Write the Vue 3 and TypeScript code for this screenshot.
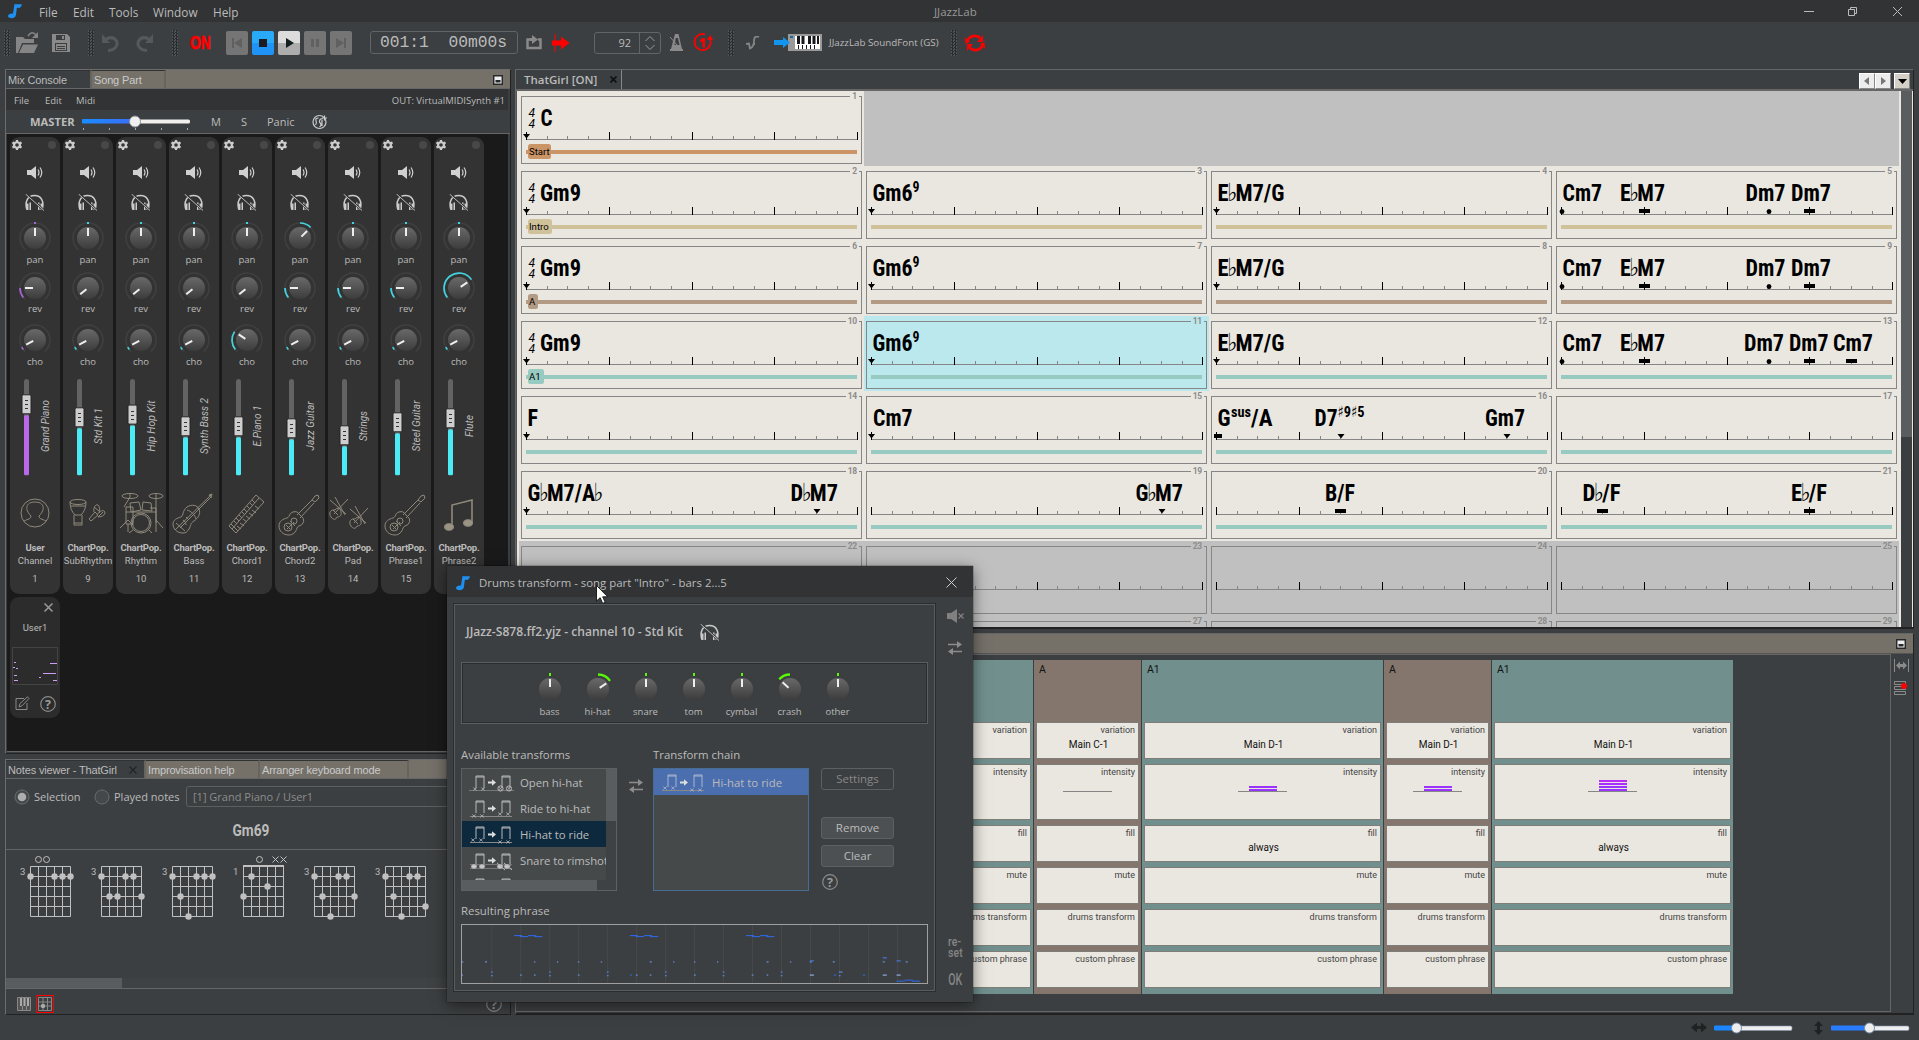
<script setup lang="ts">
interface Chord { t: string; x: number; w: number; sup?: string; sx?: number; sw?: number; tail?: string; tx?: number; tw?: number }
interface Mark { k: 'tri' | 'dot' | 'box' | 'half'; x: number }
interface Bar { n: number; sig?: boolean; label?: string; lw?: number; color?: string; sel?: boolean; off?: boolean; chords: Chord[]; marks: Mark[] }

const ORANGE = '#cb9467', SAND = '#cfc19a', BROWN = '#b29a85', TEAL = '#97cac1'
const gm9: Chord = { t: 'Gm9', x: 21, w: 41 }
const gm69: Chord = { t: 'Gm6', x: 8.5, w: 40, sup: '9', sx: 48.5, sw: 7 }
const ebg: Chord = { t: 'E♭M7/G', x: 8.5, w: 67 }
const tri0: Mark[] = [{ k: 'tri', x: 7.5 }]
const turn: Chord[] = [
  { t: 'Cm7', x: 8.5, w: 39.5 }, { t: 'E♭M7', x: 66, w: 45 },
  { t: 'Dm7', x: 191.5, w: 40 }, { t: 'Dm7', x: 237, w: 40 },
]
const turnMarks: Mark[] = [{ k: 'dot', x: 8 }, { k: 'box', x: 90.5 }, { k: 'dot', x: 215 }, { k: 'box', x: 255.5 }]

const section = (start: number, label: string, lw: number, color: string): Bar[] => [
  { n: start, sig: true, label, lw, color, chords: [gm9], marks: tri0 },
  { n: start + 1, color, chords: [gm69], marks: tri0 },
  { n: start + 2, color, chords: [ebg], marks: tri0 },
  { n: start + 3, color, chords: turn, marks: turnMarks },
]
const a1 = section(10, 'A1', 16, TEAL)
a1[1].sel = true
a1[3].chords = [turn[0], turn[1], { t: 'Dm7', x: 190, w: 40 }, { t: 'Dm7', x: 235, w: 39.5 }, { t: 'Cm7', x: 279, w: 40 }]
a1[3].marks = [...turnMarks, { k: 'box', x: 297.5 }]

const firstBar: Bar = { n: 1, sig: true, label: 'Start', lw: 23, color: ORANGE, chords: [{ t: 'C', x: 21.5, w: 12 }], marks: tri0 }
const bars: Bar[] = [
  ...section(2, 'Intro', 24, SAND),
  ...section(6, 'A', 10, BROWN),
  ...a1,
  { n: 14, color: TEAL, chords: [{ t: 'F', x: 8.5, w: 10.5 }], marks: tri0 },
  { n: 15, color: TEAL, chords: [{ t: 'Cm7', x: 9, w: 39.5 }], marks: tri0 },
  { n: 16, color: TEAL, chords: [
    { t: 'G', x: 8.5, w: 13, sup: 'sus', sx: 22, sw: 20, tail: '/A', tx: 42, tw: 21.5 },
    { t: 'D7', x: 105.5, w: 23, sup: '♯9♯5', sx: 128.5, sw: 27 },
    { t: 'Gm7', x: 276, w: 40 }], marks: [{ k: 'half', x: 5 }, { k: 'tri', x: 132 }, { k: 'tri', x: 298 }] },
  { n: 17, color: TEAL, chords: [], marks: [] },
  { n: 18, color: TEAL, chords: [{ t: 'G♭M7/A♭', x: 8.5, w: 76 }, { t: 'D♭M7', x: 271.5, w: 47.5 }], marks: [tri0[0], { k: 'tri', x: 298 }] },
  { n: 19, color: TEAL, chords: [{ t: 'G♭M7', x: 271.5, w: 47.5 }], marks: [{ k: 'tri', x: 298 }] },
  { n: 20, color: TEAL, chords: [{ t: 'B/F', x: 116, w: 30 }], marks: [{ k: 'box', x: 131.5 }] },
  { n: 21, color: TEAL, chords: [{ t: 'D♭/F', x: 28.5, w: 38 }, { t: 'E♭/F', x: 237, w: 36 }], marks: [{ k: 'box', x: 48.5 }, { k: 'box', x: 255.5 }] },
  ...[22, 23, 24, 25, 26, 27, 28, 29].map((n): Bar => ({ n, off: true, chords: [], marks: [] })),
]
const ticks = Array.from({ length: 17 }, (_, i) => ({ x: Math.round(7 + i * 20.7), big: i % 4 === 0 }))
// Splits a chord symbol so that flats can be kerned against the root letter.
const pieces = (t: string): string[] => t.split(/(♭)/).filter(s => s.length > 0)

const polar = (a: number, r: number): string => {
  const t = (a - 90) * Math.PI / 180
  return `${(18 + r * Math.cos(t)).toFixed(2)} ${(16 + r * Math.sin(t)).toFixed(2)}`
}
const arc = (from: number, to: number, r = 15): string => {
  const a = Math.min(from, to), b = Math.max(from, to)
  return `M${polar(a, r)}A${r} ${r} 0 ${b - a > 180 ? 1 : 0} 1 ${polar(b, r)}`
}
interface Knob { name: string; angle: number; from: number }
interface Strip { name: string; part: string; ch: string; inst: string; vol: number; icon: string; len: number; knobs: Knob[]; color: string; fill: string }
const strip = (name: string, part: string, ch: string, inst: string, len: number, vol: number, icon: string, pan: number, rev: number, cho: number): Strip => ({
  name, part, ch, inst, len, vol, icon,
  color: ch === '1' ? '#a963d8' : '#43d3df', fill: ch === '1' ? '#b968ee' : '#4ceaf5',
  knobs: [{ name: 'pan', angle: pan, from: 0 }, { name: 'rev', angle: rev, from: -129 }, { name: 'cho', angle: cho, from: -129 }],
})
const strips: Strip[] = [
  strip('User', 'Channel', '1', 'Grand Piano', 52, 405.3, 'user', 0, -90, -118),
  strip('ChartPop.', 'SubRhythm', '9', 'Std Kit 1', 36, 418.3, 'perc', 0, -129, -118),
  strip('ChartPop.', 'Rhythm', '10', 'Hip Hop Kit', 51, 415.6, 'drums', 0, -129, -118),
  strip('ChartPop.', 'Bass', '11', 'Synth Bass 2', 56, 427.3, 'bass', 0, -129, -118),
  strip('ChartPop.', 'Chord1', '12', 'E.Piano 1', 41, 427.3, 'keys', 0, -129, -56),
  strip('ChartPop.', 'Chord2', '13', 'Jazz Guitar', 49, 429.3, 'guitar', 45, -90, -118),
  strip('ChartPop.', 'Pad', '14', 'Strings', 30, 436.3, 'violins', 0, -90, -118),
  strip('ChartPop.', 'Phrase1', '15', 'Steel Guitar', 51, 423.3, 'guitar', 0, -90, -118),
  strip('ChartPop.', 'Phrase2', '16', 'Flute', 22, 419.3, 'notes', 0, 56, -118),
]
const drumKnobs: Knob[] = [
  { name: 'bass', angle: 0, from: 0 }, { name: 'hi-hat', angle: 56, from: 0 }, { name: 'snare', angle: 0, from: 0 },
  { name: 'tom', angle: 0, from: 0 }, { name: 'cymbal', angle: 0, from: 0 }, { name: 'crash', angle: -48, from: 0 }, { name: 'other', angle: 0, from: 0 },
]

const guitarArt = '<path d="M14 45c-6 0-10-4-10-9s4-7 8-8c3-1 2-5 6-6 3-1 5 0 6 2l3 3c2 2 2 4 1 6-1 3-5 2-6 5-1 4-4 7-8 7z"/><path d="M11 35l4 4M15 31l5 5M12 39l7-7M22 25L37 10M25 28L39 13M37 10l3-4 3-1 1 3-4 4z"/><circle cx="13" cy="37" r="4"/><circle cx="19" cy="31" r="3"/>'
const violin = '<path d="M3 27c-3-4 0-8 4-7 2-3 6-2 6 2 1 4-2 5-4 5-1 3-4 3-6 0zM6 24L20 9M2 10l16 14M7 7l10 18M5 20l5 5"/>'
const art: Record<string, string> = {
  user: '<circle cx="25" cy="23" r="14"/><path d="M14 31c4-2 7-2 7-5-7-7-5-14 4-14s11 7 4 14c0 3 3 3 7 5"/>',
  perc: '<ellipse cx="15" cy="12" rx="8" ry="2.5"/><path d="M7 12c0 6 2 10 5 13h6c3-3 5-7 5-13M8 16h14M11 25v10h8V25M11 33h8"/><path d="M26 29l6-7 3 3-7 6zM31 22c-1-5 2-8 4-7 2 2 2 5 1 8M34 25c4-6 8-5 8-2-1 3-4 4-7 4M31 17l5 4M35 27l5-5"/>',
  drums: '<ellipse cx="14" cy="6" rx="8" ry="2.5"/><ellipse cx="40" cy="6" rx="7" ry="2.5"/><circle cx="25" cy="33" r="10"/><circle cx="25" cy="33" r="8.5"/><path d="M14 3v4l-6 10M40 3v30M14 13l9-1 2 8-10 2zM27 12l8 1 1 8-10-1zM10 17h7v17h-7zM34 18h6v16M10 22h30M12 30l-8 8M12 34v8M12 30l5 5M40 30l7 8M40 34v8M17 40l-4 3M33 40l3 3"/>',
  bass: '<path d="M14 43c-6 0-10-4-10-9 0-4 4-6 8-7 3-2 1-6 6-10 5-3 10-2 12 2 2 5-1 9-5 12-4 2-3 5-5 8-2 3-3 4-6 4zM6 40L42 5M11 38L41 8M7 33l9 8M17 27l3 3M14 30c2 1 3 3 3 5M18 20c4 1 8 5 9 9M40 5l3-1-1 4z"/>',
  keys: '<path d="M7 36L34 5l8 7-28 31zM10 39L37 8M9 34l7 7M12 31l3 3M14 28l3 3M17 25l3 3M20 22l3 3M22 19l3 3M25 16l3 3M28 13l3 3M30 10l3 3M15 36l4 3M18 33l4 3M21 29l4 3M24 26l4 3M27 23l4 3M30 20l4 3M33 16l4 3"/>',
  guitar: guitarArt,
  violins: violin + '<g transform="translate(20 9)">' + violin + '</g>',
  notes: '<path d="M18 36V15l20-5v23" stroke-width="1.6"/><ellipse cx="15" cy="37" rx="4.5" ry="3.3" fill="#9a9484"/><ellipse cx="34" cy="33" rx="4.5" ry="3.3" fill="#9a9484"/>',
}

interface Fret { base: string; open: number[]; mute: number[]; dots: [number, number][]; nut?: boolean }
const frets: Fret[] = [
  { base: '3', open: [1, 2], mute: [], dots: [[0, 1], [3, 1], [4, 1], [5, 1]] },
  { base: '3', open: [], mute: [], dots: [[0, 1], [3, 1], [4, 1], [1, 3], [2, 3], [5, 3]] },
  { base: '3', open: [], mute: [], dots: [[0, 1], [3, 1], [4, 1], [5, 1], [1, 3], [2, 5]] },
  { base: '1', open: [2], mute: [4, 5], dots: [[1, 1], [3, 2], [0, 3]], nut: true },
  { base: '3', open: [], mute: [], dots: [[0, 1], [3, 1], [4, 1], [1, 3], [5, 3], [2, 5]] },
  { base: '3', open: [], mute: [], dots: [[0, 1], [3, 1], [4, 1], [1, 3], [5, 4], [2, 5]] },
]

interface Part { name: string; w: number; brown: boolean; variation: string; level: number; fill: string }
const parts: Part[] = [
  { name: 'A1', w: 241, brown: false, variation: '', level: 0, fill: '' },
  { name: 'A', w: 107, brown: true, variation: 'Main C-1', level: 0, fill: '' },
  { name: 'A1', w: 241, brown: false, variation: 'Main D-1', level: 2, fill: 'always' },
  { name: 'A', w: 107, brown: true, variation: 'Main D-1', level: 2, fill: '' },
  { name: 'A1', w: 241, brown: false, variation: 'Main D-1', level: 4, fill: 'always' },
]
const rows = ['variation', 'intensity', 'fill', 'mute', 'drums transform', 'custom phrase']
const levelColors = ['#9933ff', '#9b33ff', '#a62fff', '#b82df8']

const transforms = [
  { name: 'Open hi-hat', kind: 'open' }, { name: 'Ride to hi-hat', kind: 'ride' },
  { name: 'Hi-hat to ride', kind: 'hat' }, { name: 'Snare to rimshot', kind: 'snare' }, { name: '', kind: 'hat' },
]
const pair = (x: number, y: number): string => `<path d="M${x} ${y + 12}V${y}h8v12M${x} ${y + 1}h8"/>`
const cross = (x: number, y: number): string => `<path stroke-width=".8" d="M${x - 1.7} ${y - 1.5}l3.4 3M${x + 1.7} ${y - 1.5}l-3.4 3"/>`
const head = (x: number, y: number): string => `<ellipse cx="${x}" cy="${y}" rx="2.6" ry="1.8" fill="#ccc"/>`
const arrowArt = '<path fill="#ddd" stroke="none" d="M19 9.500h4v-2.200l4 3.200-4 3.200v-2.200h-4z"/>'
const tfArt: Record<string, string> = {
  open: pair(7, 4) + pair(33, 4) + arrowArt + '<path stroke="#777" d="M0 18.500h45"/>' + cross(6, 17) + cross(14, 17) + '<circle cx="31.500" cy="16.500" r="2.600"/><circle cx="40" cy="16.500" r="2.600"/>' + cross(31.5, 16.5) + cross(40, 16.5),
  ride: pair(7, 3) + pair(33, 3) + arrowArt + '<path stroke="#888" d="M1 18.500h42"/>' + cross(5, 18) + cross(13, 18) + cross(31, 16) + cross(39, 16),
  hat: pair(7, 3) + pair(33, 3) + arrowArt + '<path stroke="#888" d="M1 18.500h42"/>' + cross(4, 16) + cross(12, 16) + cross(31, 18) + cross(39, 18),
  snare: pair(7, 4) + pair(33, 4) + arrowArt + '<path stroke="#777" d="M1 14.500h42M1 18.500h42"/>' + head(5, 16.5) + head(13, 16.5) + head(31, 16.5) + head(38, 16.500) + '<path d="M28 13l8 7M35 13l8 7"/>',
}

const gridLines = Array.from({ length: 15 }, (_, i) => 137 + i * 85.8)
const phrase: [number, number, number, string][] = [
  ...[204, 547, 891].flatMap((x): [number, number, number, string][] => [
    [x, 1129, 24, '#2f6bf0'], [x + 18, 1132, 24, '#2f6bf0'], [x + 42, 1129, 24, '#2f6bf0'], [x + 60, 1132, 24, '#2f6bf0']]),
  ...[48, 118, 263, 331, 393, 461, 606, 675, 737, 805, 952, 1021, 1080, 1148, 1296, 1364].map((x): [number, number, number, string] => [x, 1207, x % 2 ? 4 : 6, '#6fa0ff']),
  ...[136, 308, 479, 651, 822, 994, 1166].flatMap((x): [number, number, number, string][] => [[x, 1237, x > 1100 ? 11 : 5, '#5c8eff'], [x, 1248, 5, '#5c8eff']]),
  ...[48, 222, 263, 393, 565, 606, 737, 908, 952].map((x): [number, number, number, string] => [x, 1246, 5, '#6fa0ff']),
  [547, 1246, 6, '#2f6bf0'], [1080, 1246, 12, '#9cc0ff'], [1151, 1246, 7, '#2f6bf0'], [1237, 1246, 7, '#2f6bf0'],
  [1296, 1246, 12, '#9cc0ff'], [1337, 1246, 12, '#9cc0ff'], [1080, 1204, 12, '#4a80f5'], [1296, 1195, 12, '#4a80f5'], [1337, 1204, 12, '#4a80f5'],
  [1337, 1264, 24, '#2f6bf0'], [1361, 1261, 24, '#2f6bf0'], [1382, 1264, 24, '#2f6bf0'],
]

const note = '<path fill="#1e90f0" d="M6.500 0c2 .8 4.500 0 7.500.3-.5 1.500-.8 2.700-2.200 3.500-1.300.4-2-.2-3 .2L8 10.500c-.2 2.500-2 3.700-4.500 3.700-2 0-3.500-.8-3.500-2.200C0 10 2.500 9.200 5 9.500z"/>'
const phonesArt = (bg: string): string => `<path fill="none" stroke="#ccc" stroke-width="1.500" d="M1.800 15.500C-.5 7 3 1.500 9.500 1.500S19.500 7 17.200 15.500"/><path fill="#ccc" d="M1 9.500h2.500v6.500H1.500zM15.500 9.500H18l-.5 6.500h-2zM4.500 8.500H6V16H4.500zM13 8.500h1.500V16H13z"/><path stroke="${bg}" stroke-width="2.200" d="M1.500 0L19 16.500"/><path stroke="#bbb" d="M.5 0L19 16.500"/>`
const phones = phonesArt('#333')
const phonesDialog = phonesArt('#3c3f41')
const speaker = '<path fill="#d0d0d0" d="M0 4h4l5-4v13L4 9H0z"/><path fill="none" stroke="#d0d0d0" stroke-width="1.200" d="M11 3.500q2 3 0 6M13 1.500q3.500 5 0 10"/>'
const gear = '<path fill="#ccc" fill-rule="evenodd" d="M4 0h2l.4 1.500 1.200.6L9 1.500l1 1.800-1.100 1.100v1.200L10 6.700 9 8.500l-1.400-.6-1.200.6L6 10H4l-.4-1.500-1.200-.6L1 8.500 0 6.700l1.100-1.100V4.400L0 3.300l1-1.800 1.400.6 1.200-.6zM5 3.200a1.800 1.800 0 100 3.600 1.800 1.800 0 000-3.600z"/>'
const swap = '<path fill="none" stroke="#8c8c8c" stroke-width="1.300" d="M0 3.500h11M2 10.500h12"/><path fill="#8c8c8c" d="M9 0l5 3.500L9 7zM5 7v7L0 10.500z"/>'
</script>

<template>
  <div class="app">
    <header class="titlebar">
      <svg class="logo" width="15" height="15" v-html="note" />
      <nav class="menu"><span class="m1">File</span><span class="m2">Edit</span><span class="m3">Tools</span><span class="m4">Window</span><span>Help</span></nav>
      <div class="apptitle">JJazzLab</div>
      <svg class="winbtns" width="110" height="22" fill="none" stroke="#bbb"><path d="M9 11.500h10M53.500 9.500h6v6h-6zM55.500 9.500v-2h6v6h-2M98 7l9 9M107 7l-9 9" /></svg>
    </header>

    <div class="toolbar">
      <i class="grip" />
      <svg class="t-open" width="23" height="24"><path fill="#858585" d="M0 22V6h7l2 2h9v4H6L2 22zM7 13.500h15l-4 8.500H3z" /><path fill="none" stroke="#858585" stroke-width="1.500" d="M12 5q4-6 8-1" /><path fill="#858585" d="M22 1v6h-6z" /></svg>
      <svg class="t-save" width="19" height="19"><path fill="#8a8a8a" d="M0 1h15l3 3v15H0z" /><path fill="#3c3f41" d="M4 2h9v5H4zM3 10h12v8H3z" /><path fill="#8a8a8a" d="M10 3h2v3h-2zM4 11h10v6H4z" /><path stroke="#3c3f41" d="M5 13.500h8M5 15.500h8" /></svg>
      <i class="grip g2" />
      <svg class="t-undo" width="19" height="18" fill="none" stroke="#56585a" stroke-width="3"><path d="M4 5.500Q12 1 15.500 7c2 5-2 9.500-8.500 9.500" /><path fill="#56585a" stroke="none" d="M1 0v9h8z" /></svg>
      <svg class="t-redo" width="19" height="18" fill="none" stroke="#56585a" stroke-width="3"><path d="M15 5.500Q7 1 3.500 7c-2 5 2 9.500 8.500 9.500" /><path fill="#56585a" stroke="none" d="M18 0v9h-8z" /></svg>
      <i class="grip g3" />
      <b class="on"><span>ON</span></b>
      <div class="transport">
        <button><svg width="22" height="24" fill="#606060"><path d="M6 7h2v10H6zM16 7v10l-8-5z" /></svg></button>
        <button class="stop"><svg width="22" height="24"><path fill="#1b1b20" d="M7 8h8v8H7z" /></svg></button>
        <button class="play"><svg width="22" height="24"><path fill="#142020" d="M8 7l8 5-8 5z" /></svg></button>
        <button><svg width="22" height="24" fill="#606060"><path d="M7 8h3v8H7zM12 8h3v8h-3z" /></svg></button>
        <button><svg width="22" height="24" fill="#606060"><path d="M6 7v10l8-5zM14 7h2v10h-2z" /></svg></button>
      </div>
      <div class="time">001:1&nbsp; 00m00s</div>
      <svg class="t-loop" width="17" height="16" fill="none" stroke="#8a8a8a" stroke-width="2.500"><path d="M5 4.500H1.500V13h13V4.500H12" /><path fill="#8a8a8a" stroke="none" d="M6 0l6 4.500L6 9V6H4V3h2z" /></svg>
      <svg class="t-follow" width="18" height="18" fill="#f00"><path d="M0 6.500h9V2.500l8.500 6.500L9 15.500v-4H0z" /><path d="M2.500 0h1v18h-1z" /></svg>
      <div class="tempo"><span>92</span><svg width="20" height="22" fill="none" stroke="#999"><path d="M5.500 9l4.500-4.500L14.500 9M5.500 13l4.500 4.500 4.500-4.500" /></svg></div>
      <svg class="t-metro" width="13" height="17"><path fill="#8a8a8a" fill-rule="evenodd" d="M5 0h3.500l3.500 15h1v2H0v-2h1zM5.700 4L4.500 11h5L8 4z" /><path stroke="#8a8a8a" d="M0 3l8 9" /></svg>
      <svg class="t-one" width="20" height="19" fill="none" stroke="#f00" stroke-width="1.800"><path d="M12 1.400A8 8 0 1015.800 4" /><path fill="#f00" stroke="none" d="M14 7l3.500-5L20 7zM9.500 5H12v9.500H9.500V8.500L7 9V7z" /></svg>
      <i class="grip g4" />
      <svg class="t-curve" width="14" height="14" fill="none" stroke="#858585" stroke-width="1.800"><path d="M0 8l3-.5 1 5Q8 11 8 5t5-4M7 8h2" /></svg>
      <svg class="t-piano" width="49" height="19"><path fill="#999" d="M14 1h34v17H14z" /><path fill="#1295ee" d="M0 7h9V4l7 5.500L9 15v-3H0z" /><path fill="#fff" d="M21 3h25v13H21z" /><path fill="#16181c" d="M23 3h3v8h-3zM27.500 3h3v8h-3zM34 3h3v8h-3zM38.500 3h3v8h-3zM43 3h2v8h-2zM24 12h1v4h-1zM28 12h1v4h-1zM32 12h1v4h-1zM36 12h1v4h-1zM40 12h1v4h-1z" /><path fill="#176aa0" d="M16 3h3v2h-3z" /></svg>
      <span class="font">JJazzLab SoundFont (GS)</span>
      <i class="grip g5" />
      <svg class="t-sync" width="20" height="18" fill="none" stroke="#f00" stroke-width="2.600"><path d="M2.300 8A7.500 7 0 0115 4M17.700 10A7.500 7 0 015 14" /><path fill="#f00" stroke="none" d="M0 3l5 5-4.500 2zM20 15l-5-5 4.500-2z" /><path fill="#f00" stroke="none" d="M18 1v7h-6zM2 17v-7h6z" /></svg>
    </div>

    <main class="main">
      <div class="leftcol">
        <section class="panel mix">
          <div class="tabs"><span class="tab on1 w84">Mix Console</span><span class="tab w74">Song Part</span><svg class="restore" width="10" height="10"><path fill="#eee" stroke="#26282a" stroke-width="1.500" d="M.7.7h8.600v8.600H.7z" /><path fill="#26282a" d="M2.500 5h5v2.500h-5z" /></svg></div>
          <div class="mixmenu"><span>File</span><span>Edit</span><span>Midi</span><em>OUT: VirtualMIDISynth #1</em></div>
          <div class="master">
            <b>MASTER</b>
            <svg width="112" height="20"><rect x="1" y="7" width="55" height="4.500" rx="1" fill="url(#gr)" /><rect x="52" y="7.500" width="57" height="4" rx="1.500" fill="#f2f0ee" /><circle cx="54" cy="9.500" r="5.500" fill="#f0f0f0" stroke="#8d9093" /><path stroke="#aaa" d="M2.500 16v2M28.500 16v2M54.500 16v2M80.500 16v2M106.500 16v2" />
              <defs><linearGradient id="gr"><stop offset="0" stop-color="#1a8cff" /><stop offset="1" stop-color="#3c6cfa" /></linearGradient></defs></svg>
            <span class="mm">M</span><span class="ms">S</span><span class="mp">Panic</span>
            <svg class="sty" width="16" height="16" fill="none" stroke="#ccc" stroke-width="1.200"><circle cx="7.500" cy="8" r="6.500" /><path d="M6.500 4Q3 4 4 6.500T3.500 11M7.500 13q3-2 0-5 0-4 3-3M10 6v6M10 4h5M12.500 1.500v5" /></svg>
          </div>
          <div class="desk">
            <div class="strips">
              <div v-for="s in strips" :key="s.ch" class="strip">
                <div class="s-head"><svg width="10" height="10" v-html="gear" /><i /></div>
                <div class="s-spk"><svg width="17" height="14" v-html="speaker" /></div>
                <div class="s-ph"><svg width="20" height="17" v-html="phones" /></div>
                <template v-for="k in s.knobs" :key="k.name">
                  <div class="s-knob" :class="k.name">
                    <svg width="36" height="32">
                      <path :d="arc(-140, 140)" fill="none" stroke="#404040" stroke-width="1.500" />
                      <circle cx="18" cy="16" r="11" fill="url(#kg)" />
                      <path v-if="k.angle !== k.from" :d="arc(k.from, k.angle)" fill="none" :stroke="s.color" stroke-width="1.700" />
                      <path v-else-if="k.from === 0" d="M17 0h2v2h-2z" :fill="s.color" />
                      <path d="M18 6v8" stroke="#eee" stroke-width="2" :transform="`rotate(${k.angle} 18 16)`" />
                    </svg>
                  </div>
                  <div class="s-lab" :class="'l' + k.name">{{ k.name }}</div>
                </template>
                <svg class="s-vol" width="50" height="110">
                  <rect x="14" y="11" width="5" height="96" rx="2.500" fill="#636363" />
                  <rect x="14" :y="s.vol - 358" width="5" :height="465 - s.vol + 0.3" rx="1.500" :fill="s.fill" />
                  <rect x="12" :y="s.vol - 378.500" width="9" height="19" rx="1.500" fill="#cecece" stroke="#252525" />
                  <path stroke="#333" :transform="`translate(0 ${Math.round(s.vol) - 369})`" d="M15 -3.500h3M15 .5h3M15 4.500h3" />
                  <text transform="translate(39 58) rotate(-90)" text-anchor="middle" :textLength="s.len" lengthAdjust="spacingAndGlyphs" class="vname">{{ s.inst }}</text>
                </svg>
                <svg class="s-art" width="50" height="46" fill="none" stroke="#8f897b" v-html="art[s.icon]" />
                <div class="s-n1">{{ s.name }}</div><div class="s-n2">{{ s.part }}</div><div class="s-n3">{{ s.ch }}</div>
              </div>
            </div>
            <div class="user1">
              <svg class="ux" width="9" height="9" stroke="#999" stroke-width="1.500"><path d="M.5.5l8 8M8.500.5l-8 8" /></svg>
              <div class="un">User1</div>
              <svg width="46" height="38"><path fill="none" stroke="#444" d="M.5.5h45v37H.5z" /><path stroke="#cf9ff5" d="M2 15.500h2M1 20.500h2M4 21.500h2M2 28.500h3M2 33.500h4M38 16.500h7M31 26.500h13M27 30.500h2M41 33.500h4" /></svg>
              <div class="ub"><svg width="15" height="15" fill="none" stroke="#8a8a8a"><path d="M9 2.500H1v11h11V7M4 11l1-3.500L12.500.8l1.500 1.700L7 9.800z" /></svg>
                <svg width="16" height="16"><circle cx="8" cy="8" r="7.300" fill="none" stroke="#8a8a8a" stroke-width="1.200" /><text x="8" y="12.500" text-anchor="middle" class="qm">?</text></svg></div>
            </div>
          </div>
        </section>

        <section class="panel notes">
          <div class="tabs"><span class="tab on1 w139">Notes viewer - ThatGirl<svg width="8" height="8" stroke="#222" stroke-width="1.200"><path d="M.5.5l7 7M7.500.5l-7 7" /></svg></span><span class="tab w112">Improvisation help</span><span class="tab w148">Arranger keyboard mode</span></div>
          <div class="radios">
            <svg width="16" height="16"><circle cx="8" cy="8" r="7" fill="#43494a" stroke="#6b6b6b" /><circle cx="8" cy="8" r="4.300" fill="#adadad" /></svg><span class="r1">Selection</span>
            <svg width="16" height="16"><circle cx="8" cy="8" r="7" fill="#43494a" stroke="#6b6b6b" /></svg><span class="r2">Played notes</span>
            <div class="combo">[1] Grand Piano / User1</div>
          </div>
          <div class="chordname"><svg width="60" height="24"><text x="11.500" y="18" textLength="37" lengthAdjust="spacingAndGlyphs">Gm69</text></svg></div>
          <div class="frets">
            <svg v-for="(f, i) in frets" :key="i" width="71" height="78">
              <text x="0" y="25">{{ f.base }}</text>
              <g transform="translate(10.500 16.500)" fill="none" stroke="#c0c0c0">
                <path d="M0 0h40v50H0zM8 0v50M16 0v50M24 0v50M32 0v50M0 10h40M0 20h40M0 30h40M0 40h40" />
                <path v-if="f.nut" d="M-.5 -.5h41" stroke-width="2" />
                <circle v-for="o in f.open" :key="o" :cx="o * 8" cy="-7" r="3" />
                <path v-for="m in f.mute" :key="m" :d="`M${m * 8 - 3} -10l6 6m0 -6l-6 6`" />
                <circle v-for="(d, j) in f.dots" :key="j" :cx="d[0] * 8" :cy="d[1] * 10" r="3.200" fill="#c0c0c0" stroke="none" />
              </g>
            </svg>
          </div>
          <div class="hscroll"><i /></div>
          <div class="notefoot">
            <svg width="14" height="14"><path fill="#555" stroke="#888" d="M.5.500h13v13H.5z" /><path stroke="#aaa" stroke-width="2" d="M4 1v8M7.500 1v8M11 1v8" /><path stroke="#888" d="M5.500 9v5M9.500 9v5" /></svg>
            <svg class="redbox" width="14" height="14"><path fill="none" stroke="#888" d="M.5.500h13v13H.5zM5 0v14M9.500 0v14M0 5h14M0 9h14" /><circle cx="5" cy="9" r="2.200" fill="#aaa" /></svg>
            <svg class="nq" width="16" height="16"><circle cx="8" cy="8" r="7.300" fill="none" stroke="#8a8a8a" stroke-width="1.200" /><text x="8" y="12.500" text-anchor="middle" class="qm">?</text></svg>
          </div>
        </section>
      </div>

      <div class="rightcol">
        <section class="editor">
          <div class="edtabs">
            <div class="edtab">ThatGirl [ON]<svg width="7" height="7" stroke="#111" stroke-width="1.800"><path d="M.5.5l6 6M6.500.5l-6 6" /></svg></div>
            <div class="navs"><span class="nb"><svg width="6" height="8" fill="#777"><path d="M5 0v8L0 4z" /></svg></span><span class="nb"><svg width="6" height="8" fill="#777"><path d="M1 0v8l5-4z" /></svg></span><span class="nb dd"><svg width="9" height="5"><path d="M0 0h9L4.500 5z" /></svg></span></div>
          </div>
          <div class="edbody">
            <div class="sheet">
              <div v-for="b in [firstBar, ...bars]" :key="b.n" class="bar" :class="{ sel: b.sel, off: b.off, first: b.n === 1 }">
                <div class="frame"><span class="num">{{ b.n }}</span></div>
                <svg width="345" height="75" class="barart">
                  <g shape-rendering="crispEdges">
                    <rect x="7" y="48" width="331" height="1" fill="#868686" />
                    <template v-for="t in ticks" :key="t.x"><rect v-if="t.big" :x="t.x" y="41" width="1" height="8" fill="#000" /><rect v-else :x="t.x" y="45" width="1" height="3" fill="#868686" /></template>
                    <rect v-if="b.color" x="7" y="59" width="331" height="4" :fill="b.color" />
                  </g>
                  <rect v-if="b.label" x="9" y="53" :width="b.lw" height="15" rx="2.500" :fill="b.color" />
                  <text v-if="b.label" x="10" y="64" class="lab">{{ b.label }}</text>
                  <g v-if="b.sig" class="sig"><text x="9.500" y="26">4</text><text x="9.500" y="37">4</text></g>
                  <template v-for="(m, i) in b.marks" :key="i">
                    <path v-if="m.k === 'tri'" :d="`M${m.x - 3.500} 43h7l-3.500 4.500z`" />
                    <ellipse v-else-if="m.k === 'dot'" :cx="m.x" cy="45.500" rx="2.400" ry="2.500" />
                    <rect v-else-if="m.k === 'box'" :x="m.x - 5.500" y="43" width="11" height="4" />
                    <rect v-else :x="m.x" y="43" width="8" height="4" />
                  </template>
                  <g v-for="(c, i) in b.chords" :key="'c' + i" class="chord">
                    <text :x="c.x" y="35" :textLength="c.w" lengthAdjust="spacingAndGlyphs"><tspan v-for="(p, j) in pieces(c.t)" :key="j" :class="{ flat: p === '♭' }" :dx="j ? (p === '♭' ? -1.5 : -2) : 0">{{ p }}</tspan></text>
                    <text v-if="c.sup" :x="c.sx" y="26" class="sup" :textLength="c.sw" lengthAdjust="spacingAndGlyphs">{{ c.sup }}</text>
                    <text v-if="c.tail" :x="c.tx" y="35" :textLength="c.tw" lengthAdjust="spacingAndGlyphs">{{ c.tail }}</text>
                  </g>
                </svg>
              </div>
            </div>
            <div class="vscroll"><i /></div>
          </div>
        </section>

        <section class="structure">
          <div class="sttitle"><svg width="10" height="10"><path fill="#eee" stroke="#26282a" stroke-width="1.500" d="M.7.7h8.600v8.600H.7z" /><path fill="#26282a" d="M2.500 5h5v2.500h-5z" /></svg></div>
          <div class="stbody">
            <div class="stview">
              <div v-for="(p, i) in parts" :key="i" class="part" :class="{ brown: p.brown }" :style="{ width: p.w + 'px' }">
                <div class="phead">{{ p.name }}</div>
                <div v-for="r in rows" :key="r" class="pbox" :class="{ tall: r === 'intensity' }">
                  <span class="plab">{{ r }}</span>
                  <span v-if="r === 'variation'" class="pval">{{ p.variation }}</span>
                  <span v-if="r === 'fill'" class="pval">{{ p.fill }}</span>
                  <div v-if="r === 'intensity'" class="level"><i v-for="n in p.level" :key="n" :style="{ background: levelColors[n - 1] }" /></div>
                </div>
              </div>
            </div>
            <div class="stside">
              <svg width="15" height="13" fill="none" stroke="#8a8a8a"><path d="M.5 0v13M14.500 0v13" /><path fill="#8a8a8a" stroke="none" d="M2 6.500L6 2.500V5h3V2.500l4 4-4 4V8H6v2.500z" /></svg>
              <svg width="13" height="15" fill="none" stroke="#8a8a8a"><path d="M.5.500h11v3H.5zM.5 5.500h11v3H.5zM.5 10.500h11v3H.5z" /><circle cx="10" cy="5" r="3" fill="#f00" stroke="none" /></svg>
            </div>
          </div>
        </section>
      </div>
    </main>

    <footer class="status">
      <svg width="16" height="11" fill="#1f2122"><path d="M0 5.500L6 .5V4h4V.5l6 5-6 5V7H6v3.500z" /></svg>
      <svg class="sl" width="80" height="14"><rect x="1" y="4.500" width="24" height="5" rx="1" fill="#1a86ff" /><rect x="22" y="5" width="57" height="4.500" rx="1.500" fill="#eee" stroke="#7d94ad" stroke-width=".6" /><circle cx="23.500" cy="7" r="5" fill="#eee" stroke="#7d94ad" /></svg>
      <svg class="va" width="11" height="14" fill="#1f2122"><path d="M5.500 0L10 5H7v4h3l-4.500 5L1 9h3V5H1z" /></svg>
      <svg class="sl2" width="80" height="14"><rect x="1" y="4.500" width="40" height="5" rx="1" fill="#2a7cff" /><rect x="38" y="5" width="41" height="4.500" rx="1.500" fill="#eee" stroke="#7d94ad" stroke-width=".6" /><circle cx="39.500" cy="7" r="5" fill="#eee" stroke="#7d94ad" /></svg>
    </footer>

    <svg width="0" height="0" class="defs"><defs><linearGradient id="kg" x1="0" y1="0" x2="0" y2="1"><stop offset="0" stop-color="#696969" /><stop offset="1" stop-color="#3c3c3c" /></linearGradient></defs></svg>

    <div class="dialog">
      <div class="dtitle"><svg width="15" height="15" v-html="note" /><span>Drums transform - song part "Intro" - bars 2...5</span><svg class="dclose" width="11" height="11" stroke="#ccc"><path d="M.5.5l10 10M10.500.5l-10 10" /></svg></div>
      <div class="dbody">
        <div class="dmain">
          <div class="dhead"><b>JJazz-S878.ff2.yjz - channel 10 - Std Kit</b><svg width="20" height="17" v-html="phonesDialog" /></div>
          <div class="dknobs">
            <div v-for="k in drumKnobs" :key="k.name" class="dk">
              <svg width="36" height="32">
                <path :d="arc(-140, 140)" fill="none" stroke="#3e3e3e" stroke-width="1.500" />
                <circle cx="18" cy="16" r="11" fill="url(#kg)" />
                <path v-if="k.angle" :d="arc(k.from, k.angle, 14.500)" fill="none" stroke="#59f808" stroke-width="2.300" />
                <path v-else d="M17 0h2v3h-2z" fill="#59f808" />
                <path d="M18 6v8" stroke="#eee" stroke-width="2" :transform="`rotate(${k.angle} 18 16)`" />
              </svg><span>{{ k.name }}</span>
            </div>
          </div>
          <div class="dcols">
            <div class="dc1"><label>Available transforms</label>
              <div class="list">
                <div class="lrow"><div class="items">
                  <div v-for="(t, i) in transforms" :key="i" class="item" :class="{ cur: i === 2 }"><svg width="46" height="21" fill="none" stroke="#b8b8b8" v-html="tfArt[t.kind]" /><span>{{ t.name }}</span></div>
                </div><div class="lv"><i /></div></div>
                <div class="lh"><i /></div>
              </div>
            </div>
            <svg class="dswap" width="14" height="14" v-html="swap" />
            <div class="dc2"><label>Transform chain</label>
              <div class="list chain"><div class="item"><svg width="46" height="21" fill="none" stroke="#a9b5cd" v-html="tfArt.hat" /><span>Hi-hat to ride</span></div></div>
            </div>
            <div class="dbtns"><button class="dis">Settings</button><button class="b2">Remove</button><button class="b3">Clear</button>
              <svg class="dq" width="16" height="16"><circle cx="8" cy="8" r="7.300" fill="none" stroke="#8a8a8a" stroke-width="1.200" /><text x="8" y="12.500" text-anchor="middle" class="qm">?</text></svg></div>
          </div>
          <label class="dl3">Resulting phrase</label>
          <svg class="phrase" width="467" height="60" viewBox="47 1095 1383 178" preserveAspectRatio="none">
            <rect v-for="x in gridLines" :key="x" :x="x" y="1098" width="2.500" height="172" fill="#484b4d" />
            <rect v-for="(n, i) in phrase" :key="'n' + i" :x="n[0]" :y="n[1] - 1" :width="n[2]" height="3" :fill="n[3]" />
            <rect x="48.500" y="1096.500" width="1380" height="175" fill="none" stroke="#a0a0a0" stroke-width="3" />
          </svg>
        </div>
        <div class="dside">
          <svg width="17" height="14"><path fill="#808080" d="M0 4h4l6-4v14l-6-4H0z" /><path stroke="#808080" stroke-width="1.300" d="M11.500 4.500l5 5M16.500 4.500l-5 5" /></svg>
          <svg class="dsw" width="14" height="14" v-html="swap" />
          <div class="reset"><div>re-</div><div>set</div></div>
          <div class="ok">OK</div>
        </div>
      </div>
    </div>
    <svg class="cursor" width="13" height="19"><path fill="#fff" stroke="#111" stroke-width=".9" d="M.5.5v15.500l3.700-3.300 2.500 5.700 2.500-1.100-2.500-5.500h5z" /></svg>
  </div>
</template>

<style>
body { background: #3c3f41; overflow: hidden; }
</style>
<style scoped>
.app { width: 1919px; height: 1040px; background: #3c3f41; color: #bbb; font: 11px/14px "Open Sans", sans-serif; display: flex; flex-direction: column; position: relative; overflow: hidden; }
.app :deep(*), .app * { box-sizing: border-box; }
svg { display: block; flex: none; }
i { display: block; flex: none; }
span, b, label { white-space: nowrap; }
.titlebar { height: 22px; background: #313335; display: flex; align-items: center; flex: none; padding-top: 1px; }
.logo { margin-left: 8px; }
.menu { display: flex; margin-left: 16px; font-size: 11.800px; width: 700px; }
.m1 { width: 34px; } .m2 { width: 36px; } .m3 { width: 44px; } .m4 { width: 60px; }
.apptitle { margin-left: 195px; color: #999; font-size: 11.5px; width: 100px; }
.winbtns { margin-left: auto; margin-right: 14px; margin-top: -1px; }
.toolbar { height: 47px; display: flex; align-items: center; padding: 0 0 6px 4px; flex: none; }
.toolbar > * { flex: none; }
.grip { width: 6px; height: 26px; background: repeating-conic-gradient(#26282a 0 25%, #56595c 0 50%) 0 0/3px 3px; opacity: .8; }
.t-open { margin-left: 6px; } .t-save { margin-left: 13px; } .g2 { margin-left: 17px; }
.t-undo { margin-left: 7px; } .t-redo { margin-left: 15px; } .g3 { margin-left: 18px; }
.on { margin-left: 12px; width: 24px; color: #f00; font: bold 18px/20px "Liberation Sans", sans-serif; }
.on span { display: inline-block; transform: scaleX(.76); transform-origin: 0 0; -webkit-text-stroke: .6px #f00; }
.transport { display: flex; gap: 4px; margin-left: 12px; }
.transport button { width: 22px; height: 24px; border: 0; padding: 0; border-radius: 2px; background: #757575; }
.transport .stop { background: linear-gradient(#29aaf8 50%, #2094f6 50%); }
.transport .play { background: linear-gradient(#dcdcdc 50%, #adadad 50%); }
.time { margin-left: 18px; width: 148px; height: 23px; border: 1px solid #626568; border-radius: 3px; font: 16.300px/21px "Liberation Mono", monospace; padding-left: 9px; white-space: pre; }
.t-loop { margin-left: 8px; } .t-follow { margin-left: 9px; }
.tempo { margin-left: 24px; width: 67px; height: 22px; border: 1px solid #626568; border-radius: 3px; display: flex; align-items: center; }
.tempo span { width: 46px; height: 20px; line-height: 20px; padding-right: 8px; text-align: right; border-right: 1px solid #626568; }
.t-metro { margin-left: 9px; } .t-one { margin-left: 10px; } .g4 { margin-left: 15px; } .t-curve { margin-left: 12px; } .t-piano { margin-left: 14px; }
.font { margin-left: 6px; width: 117px; font-size: 9.800px; } .g5 { margin-left: 5px; } .t-sync { margin-left: 8px; }
.main { height: 946px; display: flex; gap: 5px; padding-left: 5px; flex: none; }
.leftcol { width: 506px; display: flex; flex-direction: column; gap: 5px; flex: none; }
.panel { border: 1px solid #6c6c6c; border-right-color: #222; border-bottom-color: #222; display: flex; flex-direction: column; }
.mix { height: 685px; } .notes { height: 256px; }
.tabs { height: 19px; background: #757169; display: flex; border-bottom: 1px solid #666; font: 11px/18px "Liberation Sans", sans-serif; letter-spacing: -.15px; flex: none; }
.tab { padding-left: 2px; height: 18px; border-right: 2px solid #67645d; border-top: 1px solid #303234; color: #c9c9c9; display: flex; align-items: center; }
.on1 { background: #3c3f41; color: #bbb; }
.on1 svg { margin-left: 12px; }
.w84 { width: 86px; } .w74 { width: 74px; } .w139 { width: 140px; } .w112 { width: 114px; } .w148 { width: 149px; }
.restore { margin: 5px 7px 0 auto; }
.mixmenu { height: 21px; background: #313335; display: flex; font-size: 9.500px; line-height: 24px; padding: 0 3px 0 8px; margin-right: 2px; flex: none; }
.mixmenu span { width: 31px; } .mixmenu em { font-style: normal; margin-left: auto; }
.master { height: 24px; display: flex; align-items: center; border-bottom: 1px solid #666; padding-left: 24px; flex: none; }
.master svg { margin-top: 1px; } .master b { width: 51px; font-size: 11.200px; }
.mm { margin-left: 18px; width: 30px; } .ms { width: 26px; } .mp { width: 45px; }
.desk { background: #1a1a1a; flex: 1; margin: 0 2px 1px 1px; padding: 3px 0 0 3px; border-bottom: 1px solid #666; }
.strips { display: flex; gap: 3px; }
.strip { width: 50px; height: 457px; background: #333; border-radius: 9px; display: flex; flex-direction: column; align-items: center; flex: none; overflow: hidden; }
.s-head { height: 15px; display: flex; align-items: center; justify-content: space-between; width: 50px; padding: 0 4px 0 2px; }
.s-head i { width: 8px; height: 8px; border-radius: 50%; background: #484848; }
.s-spk { height: 41px; display: flex; align-items: center; }
.s-ph { height: 18px; display: flex; align-items: center; }
.s-knob { display: flex; align-items: flex-end; }
.s-knob.pan { height: 43px; } .s-knob.rev { height: 38px; } .s-knob.cho { height: 42px; }
.s-lab { font-size: 9.500px; } .lpan { height: 12px; line-height: 12px; } .lrev { height: 10px; line-height: 10px; } .lcho { height: 12px; line-height: 12px; }
.vname { font: italic 11px "Roboto", sans-serif; fill: #bbb; }
.s-art { margin-top: 12px; margin-bottom: 4px; }
.s-n1, .s-n2, .s-n3 { font: 9.500px/13px "Roboto", sans-serif; white-space: nowrap; }
.s-n1 { font-weight: 700; height: 14px; line-height: 16px; letter-spacing: -.25px; } .s-n2 { height: 13px; } .s-n3 { height: 23px; line-height: 24px; }
.user1 { margin-top: 3px; width: 50px; height: 121px; border-radius: 9px; background: #2c2c2c; display: flex; flex-direction: column; align-items: center; }
.ux { margin: 6px 7px 0 auto; } .un { font: 9.500px/14px "Roboto", sans-serif; margin: 9px 0 12px; }
.ub { display: flex; gap: 10px; margin-top: 11px; padding-left: 1px; }
.qm { font: bold 12.500px "Open Sans", sans-serif; fill: #999; }
.radios { display: flex; align-items: center; height: 35px; padding-left: 8px; flex: none; }
.r1 { margin-left: 4px; width: 60px; } .r2 { margin-left: 4px; width: 72px; }
.combo { flex: 1; height: 21px; border: 1px solid #5e6060; border-radius: 3px; padding-left: 6px; line-height: 19px; color: #8c8c8c; }
.chordname { height: 36px; display: flex; justify-content: center; align-items: center; padding: 0 15px 4px 0; border-bottom: 1px solid #636363; flex: none; }
.chordname text { font: bold 16.500px "Roboto", sans-serif; fill: #bbb; }
.frets { height: 128px; display: flex; padding-left: 14px; flex: none; }
.frets text { font: 9.500px "Roboto", sans-serif; fill: #bbb; }
.hscroll { height: 11px; border-bottom: 1px solid #666; background: #3f4244; flex: none; }
.hscroll i { height: 10px; width: 116px; background: #585c5f; }
.notefoot { display: flex; align-items: center; padding: 4px 8px 0 11px; flex: 1; }
.redbox { outline: 1px solid #f00; outline-offset: 1px; margin-left: 7px; }
.nq { margin-left: auto; }
.rightcol { width: 1399px; display: flex; flex-direction: column; gap: 4px; margin-left: -1px; }
.editor { height: 560px; border: 1px solid #666; border-right-color: #222; border-bottom: 2px solid #222; display: flex; flex-direction: column; overflow: hidden; flex: none; }
.edtabs { height: 21px; border-bottom: 2px solid #666; display: flex; justify-content: space-between; flex: none; }
.edtab { width: 106px; border-right: 1px solid #888; padding: 0 4px 0 8px; font-weight: 600; font-size: 11.500px; display: flex; align-items: center; justify-content: space-between; line-height: 16px; }
.navs { display: flex; padding: 3px 3px 0 0; } .nb { width: 16px; height: 16px; background: #ececec; border: 1px solid #fff; border-right-color: #888; border-bottom-color: #888; display: flex; align-items: center; justify-content: center; } .dd { margin-left: 3px; background: #d4d0c8; }
.edbody { flex: 1; display: flex; background: #eae7e0; overflow: hidden; border-left: 1px solid #555; padding-left: 2px; }
.sheet { width: 1380px; height: 536px; display: grid; grid-template-columns: repeat(4, 345px); grid-auto-rows: 75px; overflow: hidden; flex: none; }
.bar { display: grid; background: #eae7e0; }
.bar > * { grid-area: 1 / 1; }
.bar.first { grid-column: 1 / 5; grid-template-columns: 345px 1fr; background: linear-gradient(90deg, #eae7e0 345px, #c0c0c0 345px); }
.bar.sel { background: #bae8ed; } .bar.off { background: #c0c0c0; }
.frame { width: 341px; height: 68px; margin: 5px 0 0 2px; border: 1px solid #868686; display: flex; justify-content: flex-end; align-items: flex-start; }
.num { font: bold 8.500px/8px "Roboto", sans-serif; color: #8c8c8c; padding: 0 2px; margin: -5px 2px 0 0; letter-spacing: -.2px; background: #eae7e0; }
.sel .num { background: #bae8ed; } .off .num { background: #c0c0c0; }
.lab { font: 9.600px "Roboto", sans-serif; }
.sig { font: italic 12px "Roboto", sans-serif; }
.chord { font: bold 23.500px "Roboto", "DejaVu Sans", sans-serif; font-stretch: 75%; } .chord .sup { font-size: 15.500px; }
.chord .flat { font-size: 25px; }
.vscroll { margin-left: 2px; width: 11px; background: #3a3e40; } .vscroll i { height: 346px; background: #595d60; }
.structure { flex: 1; border: 1px solid #666; border-right-color: #222; border-bottom: 2px solid #222; display: flex; flex-direction: column; }
.sttitle { height: 20px; background: #757169; display: flex; align-items: center; justify-content: flex-end; padding-right: 7px; border-bottom: 1px solid #555; flex: none; }
.stbody { flex: 1; display: flex; }
.stview { width: 1375px; border: 1px solid #666; border-left: 0; display: flex; gap: 1px; padding: 5px 0 0 276px; margin-bottom: 1px; flex: none; }
.part { height: 334px; background: #71908d; display: flex; flex-direction: column; gap: 5px; padding: 0 2px; flex: none; }
.part.brown { background: #84766c; }
.phead { height: 57px; color: #111; font: 10.500px/19px "Roboto", sans-serif; padding-left: 3px; }
.pbox { height: 37px; border: 1px solid #7f7d79; background: #eae7e0; display: flex; flex-direction: column; align-items: center; }
.pbox.tall { height: 56px; }
.plab { align-self: flex-end; font: 9px/13px "Roboto", sans-serif; color: #444; padding: 1px 3px 0 0; }
.pval { font: 10px/16px "Roboto", sans-serif; color: #111; margin-top: 0; padding-left: 2px; }
.level { width: 49px; height: 13px; border-bottom: 1px solid #868686; display: flex; flex-direction: column-reverse; align-items: center; gap: 1px; } .level i { width: 28px; height: 2px; }
.stside { padding: 5px 0 0 3px; display: flex; flex-direction: column; gap: 9px; }
.status { flex: 1; display: flex; align-items: center; padding: 0 9px 0 1691px; }
.sl { margin-left: 6px; } .va { margin-left: 20px; } .sl2 { margin-left: 6px; }
.defs { position: absolute; }
.dialog { position: absolute; z-index: 10; left: 447px; top: 566px; width: 526px; height: 436px; background: #3c3f41; box-shadow: 0 3px 14px rgba(0,0,0,.5), 0 0 1px #000; display: flex; flex-direction: column; }
.dtitle { height: 31px; background: #313335; display: flex; align-items: center; padding: 3px 16px 0 9px; flex: none; font-size: 11.400px; }
.dtitle span { margin-left: 8px; } .dclose { margin-left: auto; margin-bottom: 2px; }
.dbody { flex: 1; display: flex; padding: 6px 0 10px 6px; }
.dmain { width: 483px; border: 1px solid #2a2c2e; outline: 1px solid #595c5f; outline-offset: -2px; display: flex; flex-direction: column; padding: 0 7px; flex: none; }
.dhead { display: flex; align-items: center; gap: 17px; height: 58px; padding: 0 0 2px 5px; font-size: 12.100px; flex: none; }
.dhead b { font-weight: 600; }
.dknobs { height: 62px; border: 1px solid #5c5f61; outline: 1px solid #2a2c2e; outline-offset: -2px; display: flex; justify-content: center; gap: 12px; padding-right: 2px; flex: none; }
.dk { width: 36px; display: flex; flex-direction: column; align-items: center; padding-top: 10px; font-size: 9.500px; line-height: 14px; }
.dcols { display: flex; padding-top: 24px; flex: none; }
label { display: block; line-height: 14px; font-size: 11.400px; }
.list { margin-top: 6px; width: 156px; height: 123px; border: 1px solid #5e6163; background: #45494a; }
.lrow { display: flex; height: 111px; } .items { width: 144px; height: 111px; overflow: hidden; } .lv { width: 10px; background: #3f4244; } .lv i { height: 52px; background: #595d60; }
.lh { height: 10px; background: #3f4244; } .lh i { height: 10px; width: 135px; background: #595d60; }
.item { height: 26px; display: flex; align-items: center; padding-left: 7px; font-size: 11.400px; } .item svg { margin-right: 5px; } .item.cur { background: #0d293e; }
.item span { padding-top: 2px; }
.items .item span { letter-spacing: -.06px; }
.chain { border-color: #466d94; } .chain .item { background: #4b6eaf; }
.dswap { margin: 31px 10px 0 12px; }
.dbtns { margin: 20px 0 0 12px; display: flex; flex-direction: column; }
.dbtns button { width: 73px; height: 22px; border: 1px solid #5e6060; border-radius: 3px; background: #4c5052; color: #bbb; font: 11.500px/20px "Open Sans", sans-serif; padding: 0; }
.dbtns .dis { background: #3c3f41; color: #888; } .dbtns .b2 { margin-top: 27px; } .dbtns .b3 { margin: 6px 0; }
.dq { margin: 1px 0 0 1px; }
.dl3 { margin-top: 13px; } .phrase { margin-top: 6px; }
.dside { flex: 1; display: flex; flex-direction: column; align-items: center; padding: 6px 0 0 1px; color: #858585; }
.dsw { margin-top: 18px; }
.reset { font: 500 13px/11px "Roboto", sans-serif; margin-top: 281px; transform: scaleX(.8); letter-spacing: .3px; }
.ok { font: 500 17px/18px "Roboto", sans-serif; transform: scaleX(.62); margin-top: 12px; }
.cursor { position: absolute; z-index: 11; left: 596px; top: 585px; }
</style>
